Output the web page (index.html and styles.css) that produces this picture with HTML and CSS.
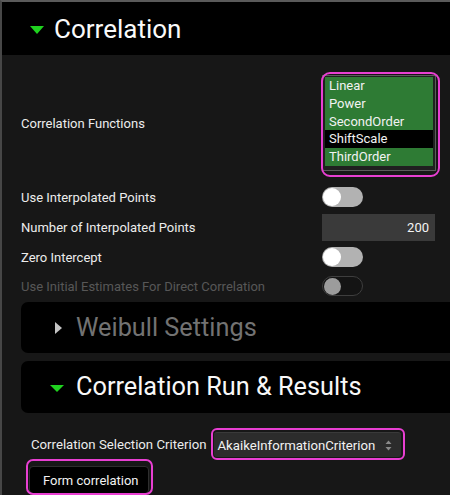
FILE: index.html
```html
<!DOCTYPE html>
<html>
<head>
<meta charset="utf-8">
<link rel="stylesheet" href="styles.css">
</head>
<body>
<div class="frame">
  <div class="header">
    <span class="tri-down"></span>
    <span class="header-title">Correlation</span>
  </div>
  <div class="content">
    <div class="row row-list">
      <div class="label">Correlation Functions</div>
      <div class="listbox hl hl-list">
        <div class="item sel">Linear</div>
        <div class="item sel">Power</div>
        <div class="item sel">SecondOrder</div>
        <div class="item">ShiftScale</div>
        <div class="item sel">ThirdOrder</div>
      </div>
    </div>
    <div class="row row-first">
      <div class="label">Use Interpolated Points</div>
      <div class="toggle"><span class="knob"></span></div>
    </div>
    <div class="row">
      <div class="label">Number of Interpolated Points</div>
      <div class="numinput">200</div>
    </div>
    <div class="row">
      <div class="label">Zero Intercept</div>
      <div class="toggle"><span class="knob"></span></div>
    </div>
    <div class="row row-last">
      <div class="label disabled">Use Initial Estimates For Direct Correlation</div>
      <div class="toggle toggle-off"><span class="knob"></span></div>
    </div>
    <div class="panel panel-weibull">
      <span class="tri-right"></span>
      <span class="panel-title muted">Weibull Settings</span>
    </div>
    <div class="panel panel-run">
      <span class="tri-down small"></span>
      <span class="panel-title">Correlation Run &amp; Results</span>
    </div>
    <div class="crit-row">
      <span class="crit-label">Correlation Selection Criterion</span>
      <div class="select hl hl-select">
        <span>AkaikeInformationCriterion</span>
        <svg class="updown" width="7" height="11" viewBox="0 0 7 11"><path d="M0.5 4 L3.5 0.5 L6.5 4 Z M0.5 7 L3.5 10.5 L6.5 7 Z" fill="#8a8a8a"/></svg>
      </div>
    </div>
    <div class="btn-row">
      <div class="button hl hl-btn">Form correlation</div>
    </div>
  </div>
</div>
</body>
</html>
```

FILE: styles.css
```css
html, body {
  margin: 0;
  padding: 0;
  background: #ffffff;
}
body {
  width: 450px;
  height: 498px;
  overflow: hidden;
  font-family: Roboto, "Liberation Sans", Arial, sans-serif;
  color: #ececec;
}
.frame {
  height: 493px;
  background: #171717;
  border-left: 2px solid #474747;
  border-top: 2px solid #5a5a5a;
  overflow: hidden;
}
.header {
  height: 53px;
  background: #000;
  display: flex;
  align-items: center;
  padding-left: 28px;
}
.tri-down {
  width: 0;
  height: 0;
  border-left: 7.5px solid transparent;
  border-right: 7.5px solid transparent;
  border-top: 8px solid #1fd21f;
  margin-right: 10px;
  margin-top: 2px;
}
.tri-down.small {
  border-left-width: 7px;
  border-right-width: 7px;
  border-top-width: 7px;
  margin-right: 12px;
}
.tri-right {
  width: 0;
  height: 0;
  border-top: 6px solid transparent;
  border-bottom: 6px solid transparent;
  border-left: 7px solid #c4c4c4;
  margin-right: 14px;
}
.header-title {
  font-size: 26px;
  color: #fafafa;
  line-height: 1;
}
.content {
  padding-left: 19px;
}
.row {
  display: flex;
  align-items: center;
  height: 30px;
}
.row-list {
  height: 96px;
  margin-top: 20px;
}
.row-first {
  margin-top: 11px;
}
.row-last {
  height: 28px;
}
.label {
  width: 301px;
  font-size: 13px;
  color: #ececec;
}
.label.disabled {
  color: #575757;
}
.listbox {
  position: relative;
  width: 114px;
  height: 96px;
  border: 1px solid #5c5c5c;
  background: #202020;
  padding: 1px 2px 0 2px;
  box-sizing: border-box;
}
.item {
  height: 17.8px;
  line-height: 17.8px;
  font-size: 13px;
  padding-left: 4px;
  color: #f2f2f2;
  background: #000;
}
.item.sel {
  background: #2e7b34;
}
.hl::after {
  content: "";
  position: absolute;
  border: 2.5px solid #e83fd2;
  border-radius: 9px;
  pointer-events: none;
}
.hl-list::after {
  left: -2px;
  top: -4px;
  right: -5px;
  bottom: -7px;
}
.toggle {
  position: relative;
  width: 41px;
  height: 20px;
  border-radius: 10px;
  background: #b2b2b2;
  box-sizing: border-box;
}
.toggle .knob {
  position: absolute;
  left: 1px;
  top: 1px;
  width: 18px;
  height: 18px;
  border-radius: 50%;
  background: #ffffff;
}
.toggle-off {
  background: #141414;
  border: 1px solid #3e3e3e;
}
.toggle-off .knob {
  left: 1px;
  top: 0.5px;
  width: 17px;
  height: 17px;
  background: #9c9c9c;
}
.numinput {
  width: 113px;
  height: 27px;
  background: #3a3a3a;
  font-size: 13px;
  line-height: 27px;
  text-align: right;
  padding-right: 6px;
  box-sizing: border-box;
  color: #f4f4f4;
}
.panel {
  background: #000;
  border-radius: 7px;
  margin-right: -20px;
  display: flex;
  align-items: center;
}
.panel-weibull {
  height: 51px;
  margin-top: 2px;
  padding-left: 34px;
}
.panel-run {
  height: 52px;
  margin-top: 8px;
  padding-left: 29px;
}
.panel-title {
  font-size: 25.3px;
  line-height: 1;
  color: #f8f8f8;
}
.panel-title.muted {
  color: #727272;
}
.crit-row {
  display: flex;
  align-items: center;
  margin-top: 19px;
  padding-left: 10px;
}
.crit-label {
  font-size: 13.2px;
  color: #ececec;
  margin-right: 8px;
}
.select {
  position: relative;
  display: flex;
  align-items: center;
  height: 25px;
  padding: 0 9px 0 3px;
  background: #2c2c2c;
  border-top: 1px solid #3a3a3a;
  border-radius: 3px;
  box-sizing: border-box;
  font-size: 13.2px;
  color: #f2f2f2;
}
.updown {
  margin-left: 10px;
}
.hl-select::after {
  left: -3px;
  top: -5px;
  right: -4px;
  bottom: -3px;
  border-radius: 6px;
}
.btn-row {
  display: flex;
  margin-top: 9px;
  padding-left: 8px;
}
.button {
  position: relative;
  height: 28px;
  padding: 0 9px 0 13px;
  display: flex;
  align-items: center;
  background: #000;
  border: 1px solid #2e2e2e;
  border-radius: 4px;
  font-size: 13px;
  color: #f2f2f2;
  box-sizing: border-box;
}
.hl-btn::after {
  left: -4px;
  top: -8px;
  right: -5px;
  bottom: -2px;
  border-radius: 7px;
}
```
